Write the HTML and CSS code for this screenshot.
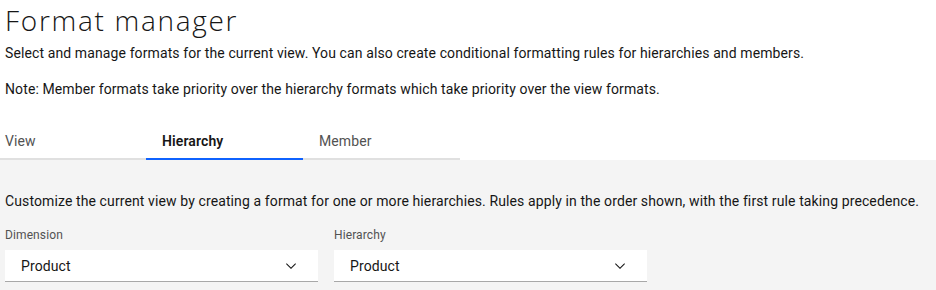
FILE: index.html
```html
<!DOCTYPE html>
<html lang="en">
<head>
    <meta charset="UTF-8">
    <meta name="viewport" content="width=device-width, initial-scale=1.0">
    <title>Format manager</title>
    <link rel="stylesheet" href="styles.css">
</head>
<body>
    <div class="header">
        <h1>Format manager</h1>
        <p class="intro">Select and manage formats for the current view. You can also create conditional formatting rules for hierarchies and members.</p>
        <p class="note">Note: Member formats take priority over the hierarchy formats which take priority over the view formats.</p>

        <div class="tabs">
            <a class="tab">View</a>
            <a class="tab selected">Hierarchy</a>
            <a class="tab">Member</a>
        </div>
    </div>

    <div class="panel">
        <p class="panel-text">Customize the current view by creating a format for one or more hierarchies. Rules apply in the order shown, with the first rule taking precedence.</p>

        <div class="fields">
            <div class="field">
                <label>Dimension</label>
                <div class="select">
                    <span>Product</span>
                    <svg width="16" height="16" viewBox="0 0 16 16"><path d="M8 11L3 6 3.7 5.3 8 9.6 12.3 5.3 13 6z" fill="#161616"/></svg>
                </div>
            </div>
            <div class="field">
                <label>Hierarchy</label>
                <div class="select">
                    <span>Product</span>
                    <svg width="16" height="16" viewBox="0 0 16 16"><path d="M8 11L3 6 3.7 5.3 8 9.6 12.3 5.3 13 6z" fill="#161616"/></svg>
                </div>
            </div>
        </div>
    </div>
</body>
</html>
```

FILE: styles.css
```css
body {
    margin: 0;
    padding: 0;
    font-family: Roboto, "Liberation Sans", Arial, sans-serif;
    letter-spacing: 0.11px;
    color: #161616;
    background: #fff;
    height: 290px;
    overflow: hidden;
}

.header {
    padding: 2px 5px 0 5px;
}

h1 {
    margin: 0;
    font-family: "Open Sans", Roboto, sans-serif;
    font-size: 28px;
    font-weight: 300;
    line-height: 36px;
    letter-spacing: 1.7px;
}

.intro, .note {
    margin: 0;
    font-size: 14px;
    line-height: 20px;
}

.intro {
    margin-top: 5px;
}

.note {
    margin-top: 16px;
}

.tabs {
    display: flex;
    margin-top: 21px;
    margin-left: -16px;
}

.tab {
    width: 157px;
    box-sizing: border-box;
    padding: 11px 16px 7px 16px;
    font-size: 14px;
    line-height: 20px;
    color: #525252;
    border-bottom: 2px solid #e0e0e0;
}

.tab.selected {
    color: #161616;
    font-weight: 600;
    border-bottom-color: #0f62fe;
}

.panel {
    background: #f4f4f4;
    padding: 31px 5px 20px 5px;
    height: 130px;
    box-sizing: border-box;
}

.panel-text {
    margin: 0;
    font-size: 14px;
    line-height: 20px;
}

.fields {
    display: flex;
    gap: 16px;
    margin-top: 16px;
}

.field {
    width: 313px;
}

.field label {
    display: block;
    font-size: 12px;
    line-height: 16px;
    color: #525252;
    margin-bottom: 7px;
}

.select {
    display: flex;
    align-items: center;
    justify-content: space-between;
    height: 31px;
    padding: 0 19px 0 16px;
    background: #fff;
    border-bottom: 1px solid #a8a8a8;
    font-size: 14px;
}
```
